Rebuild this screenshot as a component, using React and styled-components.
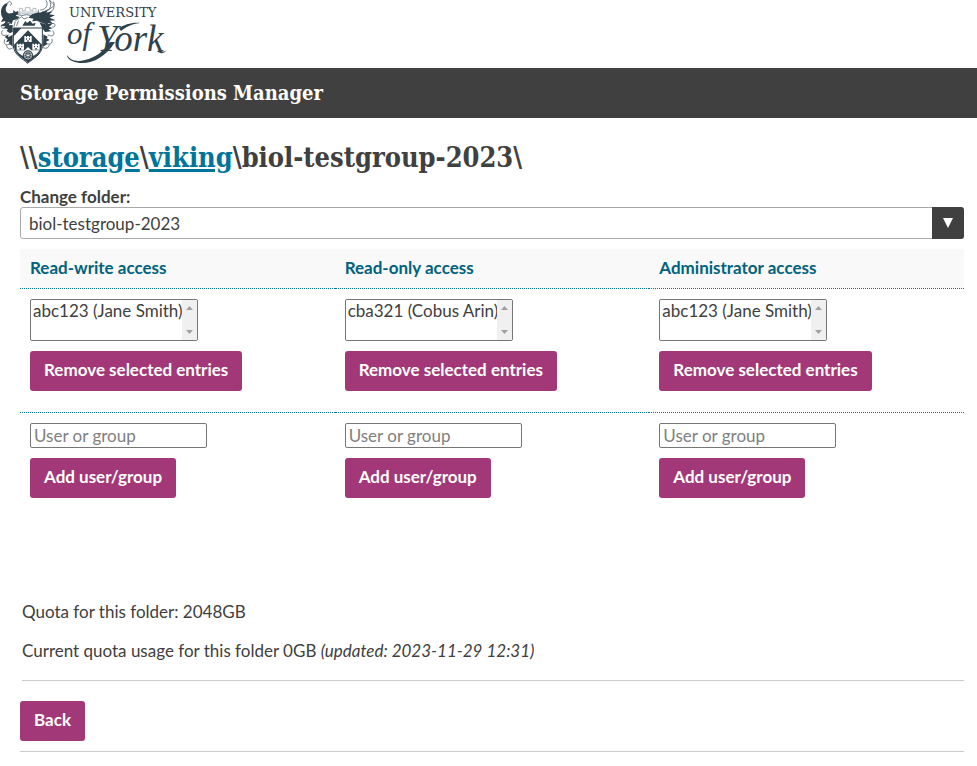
import React, { useState } from 'react';
import styled, { createGlobalStyle } from 'styled-components';

const sans = 'Lato, "Open Sans", sans-serif';
const serif = '"DejaVu Serif Condensed", "DejaVu Serif", serif';

const GlobalStyle = createGlobalStyle`
  *, *::before, *::after { box-sizing: border-box; }
  body {
    margin: 0;
    background: #fff;
    color: #404040;
    font: 17px/24px ${sans};
  }
`;

const LogoLink = styled.a`
  display: block;
  height: 68px;
`;

const TitleBar = styled.header`
  display: flex;
  align-items: center;
  min-height: 50px;
  padding: 0 20px;
  background: #404040;
  color: #fff;
  font: 700 20px/30px ${serif};
`;

const Main = styled.main`
  padding: 22px 13px 0 20px;
`;

const PathHeading = styled.h1`
  margin: 0;
  font: 700 27px/36px ${serif};
`;

const PathLink = styled.a`
  color: #00759a;
  text-decoration: underline;
  text-decoration-thickness: 3px;
  text-underline-offset: 2px;
`;

const FolderField = styled.div`
  display: flex;
  flex-direction: column;
  margin-top: 10px;
`;

const FieldLabel = styled.label`
  font-weight: 700;
  line-height: 21px;
`;

const DropDown = styled.div`
  position: relative;
  height: 32px;
`;

const FolderSelect = styled.select`
  appearance: none;
  width: 100%;
  height: 100%;
  padding: 2px 40px 0 8px;
  border: 1px solid #aaa;
  border-radius: 3px;
  background: #fff;
  color: inherit;
  font: 17px/24px ${sans};
`;

const DropDownArrow = styled.span`
  position: absolute;
  inset: 0 0 0 auto;
  display: flex;
  align-items: center;
  justify-content: center;
  width: 32px;
  border-radius: 0 3px 3px 0;
  background: #404040;
  pointer-events: none;
`;

const AccessTable = styled.table`
  width: 100%;
  margin-top: 10px;
  border-collapse: collapse;
  table-layout: fixed;
`;

const AccessHead = styled.th`
  height: 39px;
  padding: 0 10px;
  border-bottom: 1px dotted #00759a;
  background: #f9f9f9;
  color: #00627d;
  text-align: left;
`;

const AccessCell = styled.td`
  padding: 10px 10px ${(p) => (p.$divided ? 21 : 0)}px;
  border-bottom: ${(p) => (p.$divided ? '1px dotted #00759a' : '0')};
  vertical-align: top;
`;

const Stack = styled.div`
  display: flex;
  flex-direction: column;
  align-items: flex-start;
  gap: 10px;
`;

const ListFrame = styled.div`
  display: flex;
  width: 168px;
  height: 42px;
  border: 1px solid #767676;
  border-radius: 2px;
  overflow: hidden;
`;

const EntryList = styled.select`
  flex: 1;
  min-width: 0;
  padding: 0;
  border: 0;
  overflow: hidden;
  scrollbar-width: none;
  background: #fff;
  color: inherit;
  font: 17px/20px ${sans};

  option {
    min-height: 18px;
    padding: 0 2px;
    color: #404040;
  }
`;

const ScrollTrack = styled.span`
  display: flex;
  flex-direction: column;
  align-items: center;
  justify-content: space-between;
  width: 15px;
  padding: 6px 0;
  background: #f0f0f0;
`;

const Button = styled.button`
  min-height: 40px;
  padding: 0 14px 2px;
  border: 0;
  border-radius: 3px;
  background: #a33878;
  color: #fff;
  font: 700 17px/24px ${sans};
  cursor: pointer;
`;

const UserInput = styled.input`
  width: 177px;
  height: 25px;
  padding: 0 3px;
  border: 1px solid #767676;
  border-radius: 2px;
  color: inherit;
  font: 17px/22px ${sans};

  &::placeholder { color: #808080; }
`;

const Quota = styled.section`
  display: flex;
  flex-direction: column;
  gap: 15px;
  margin: 102px 0 0 2px;
  padding-bottom: 17px;
  border-bottom: 1px solid #ccc;
`;

const QuotaLine = styled.p`
  margin: 0;
`;

const Footer = styled.footer`
  padding: 20px 0 10px;
  border-bottom: 1px solid #ccc;
`;

const Ink = '#2f414b';

function Castle({ x, y }) {
  return (
    <g transform={`translate(${x} ${y})`}>
      <path d="M-11 9V-9h5v3h3v-3h6v3h3v-3h5V9z" fill="#fff" />
      <path d="M-6-2h3v4h-3zM3-2h3v4H3zM-2 4h4v5h-4z" fill={Ink} />
    </g>
  );
}

function Crest() {
  return (
    <svg x="0" y="0" width="58" height="68" viewBox="0 0 174 204">
      <g fill={Ink}>
        <path d="M22 9c2 8-5 9-5 18 0 10 7 15 16 13l7-2-1-8 8 6 7-3 2 7-9 7 12 4-8 7-12 3-4 12-9-6-12 6 2-10-13 3 6-11C4 50-1 32 8 19 12 13 17 10 22 9z" />
        <path d="M96 43l16-5 5-12-1 12 15-3 13-7-5 10 19-4-10 9 17 3-16 7 18 8-17 1 10 10-17-3 6 9-19-8-8-3-12-5-14 2 5-8-16-3z" />
        <path d="M14 69l17 1-5 6 12-1v20l-8 5-10-7 4-6-14-2 7-6-15-1z" />
        <path d="M118 67l19 6 22-3-12 10 12 5-14 3 9 6-19 2-7-10z" />
        <path d="M14 111l12-8-2 9 14-8v36l-12-10 3-6-11 3 5-9zM130 103l14 8-5 4 10 5-11 5 4 7-13 8z" />
        <path d="M67 77l9-14 5 6 9-7 8 9 9-3-3 9z" />
      </g>
      <g fill="none" stroke={Ink} strokeLinecap="round">
        <path d="M58 40V25h9v6h9v-8h14v8h9v-6h9v15zM61 36h44" strokeWidth="1" />
        <path d="M22 9l7-5 6 5-3 7M52 43l13 4 14-3 16 3 16-5M45 64c8-7 15-10 20-14l7 7 10-4M45 67l-3 12M55 63l-5 14" strokeWidth="2" />
        <path d="M122 30c16 0 24-15 17-28M127 35c22 0 31-17 22-34M136 40c24-2 30-18 25-34M149 1l13 13M144 31l17-13" strokeWidth="2" />
        <path d="M7 92c-6 11 0 18 13 13M14 119c-5 14 4 19 16 13M20 137c0 12 12 13 20 5M159 93c8 12-1 19-15 12M156 118c3 14-6 17-18 12M148 135c-3 12-14 12-22 6" strokeWidth="2" />
        <path d="M160 70c10 3 6 12-2 11M7 73c-6 5-4 12 4 12" strokeWidth="2" />
      </g>
      <path d="M40 84h87v51c0 30-29 41-44 55-14-14-43-25-43-55z" fill="#fff" stroke={Ink} strokeWidth="3" />
      <path d="M40 84h24L40 110z" fill={Ink} />
      <path d="M84 91l42 43c1 31-29 40-42 55-12-15-43-24-42-55z" fill={Ink} />
      <Castle x={84} y={117} />
      <Castle x={61} y={140} />
      <Castle x={108} y={140} />
      <path d="M49 151h25l10-10 10 10h25l-9 10-9 6-17-16-17 16-9-6z" fill="#fff" />
      <circle cx="84" cy="166" r="15" fill={Ink} />
      <circle cx="84" cy="166" r="11" fill={Ink} stroke="#fff" strokeWidth="2" />
      <path d="M84 158v16M76 163l16 6M92 163l-16 6" stroke="#fff" strokeWidth="2" />
    </svg>
  );
}

function Logo() {
  return (
    <svg width="172" height="68" viewBox="0 0 172 68" role="img" aria-label="University of York">
      <Crest />
      <g fill={Ink}>
        <text x="69" y="17" fontFamily="DejaVu Serif, serif" fontSize="13">UNIVERSITY</text>
        <text x="67" y="44" fontFamily="Liberation Serif, serif" fontStyle="italic" fontSize="31">of</text>
        <text x="97" y="51" fontFamily="Liberation Serif, serif" fontStyle="italic" fontSize="37">York</text>
        <path d="M115 42C106 57 92 64 80 63 72 62 67 59 67 55c4 6 10 7 18 5 10-2 19-9 25-18z" />
        <path d="M119 28c5-3 13-6 21-5-9 1-14 4-19 8zM160 50c2 2 5 2 7 0-3 4-7 4-10 1z" />
      </g>
    </svg>
  );
}

function Triangle({ up }) {
  return (
    <svg width="7" height="4" viewBox="0 0 7 4" aria-hidden="true">
      <path d={up ? 'M0 4L3.5 0 7 4z' : 'M0 0h7L3.5 4z'} fill="#a0a0a0" />
    </svg>
  );
}

const groups = [
  { id: 'rw', title: 'Read-write access', entry: 'abc123 (Jane Smith)' },
  { id: 'ro', title: 'Read-only access', entry: 'cba321 (Cobus Arin)' },
  { id: 'admin', title: 'Administrator access', entry: 'abc123 (Jane Smith)' },
];

export default function App() {
  const [folder, setFolder] = useState('biol-testgroup-2023');

  return (
    <>
      <GlobalStyle />
      <LogoLink href="#home"><Logo /></LogoLink>
      <TitleBar>Storage Permissions Manager</TitleBar>
      <Main>
        <PathHeading>
          {'\\\\'}<PathLink href="#storage">storage</PathLink>
          {'\\'}<PathLink href="#viking">viking</PathLink>
          {'\\biol-testgroup-2023\\'}
        </PathHeading>

        <FolderField>
          <FieldLabel htmlFor="folder">Change folder:</FieldLabel>
          <DropDown>
            <FolderSelect id="folder" value={folder} onChange={(e) => setFolder(e.target.value)}>
              <option>biol-testgroup-2023</option>
            </FolderSelect>
            <DropDownArrow aria-hidden="true">
              <svg width="10" height="10" viewBox="0 0 10 10"><path d="M0 0h10L5 10z" fill="#fff" /></svg>
            </DropDownArrow>
          </DropDown>
        </FolderField>

        <AccessTable>
          <thead>
            <tr>{groups.map((g) => <AccessHead key={g.id} scope="col">{g.title}</AccessHead>)}</tr>
          </thead>
          <tbody>
            <tr>
              {groups.map((g) => (
                <AccessCell key={g.id} $divided>
                  <Stack>
                    <ListFrame>
                      <EntryList multiple size={2} aria-label={g.title}>
                        <option>{g.entry}</option>
                      </EntryList>
                      <ScrollTrack aria-hidden="true"><Triangle up /><Triangle /></ScrollTrack>
                    </ListFrame>
                    <Button type="button">Remove selected entries</Button>
                  </Stack>
                </AccessCell>
              ))}
            </tr>
            <tr>
              {groups.map((g) => (
                <AccessCell key={g.id}>
                  <Stack>
                    <UserInput type="text" placeholder="User or group" aria-label={`User or group, ${g.title}`} />
                    <Button type="button">Add user/group</Button>
                  </Stack>
                </AccessCell>
              ))}
            </tr>
          </tbody>
        </AccessTable>

        <Quota>
          <QuotaLine>Quota for this folder: 2048GB</QuotaLine>
          <QuotaLine>Current quota usage for this folder 0GB <em>(updated: 2023-11-29 12:31)</em></QuotaLine>
        </Quota>

        <Footer>
          <Button type="button">Back</Button>
        </Footer>
      </Main>
    </>
  );
}
